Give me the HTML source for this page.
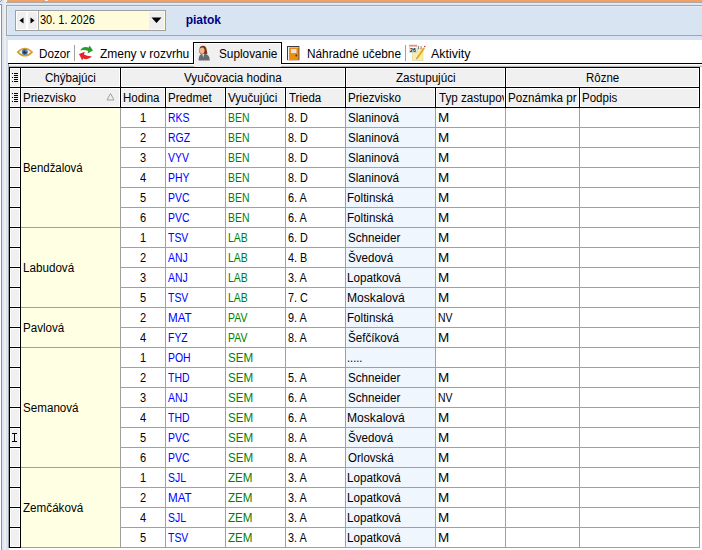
<!DOCTYPE html>
<html><head><meta charset="utf-8"><style>
html,body{margin:0;padding:0;}
body{width:702px;height:550px;overflow:hidden;position:relative;background:#fff;font-family:"Liberation Sans",sans-serif;font-size:12px;}
body>div,body>svg{position:absolute;}
div div{position:absolute;}
.t{position:absolute;white-space:pre;line-height:13px;height:13px;transform-origin:0 0;color:#000;}
</style></head><body>
<div style="left:0px;top:0px;width:702px;height:40px;background:#d9e4f2;"></div>
<div style="left:7px;top:0px;width:695px;height:1px;background:#f2a164;"></div>
<div style="left:7px;top:1px;width:695px;height:1px;background:#00fbfb;"></div>
<div style="left:7px;top:2px;width:695px;height:1px;background:#b4a8a6;"></div>
<div style="left:0px;top:0px;width:7px;height:4px;background:#dfe8f5;"></div>
<div style="left:1px;top:0px;width:1px;height:1px;background:#8c939c;"></div>
<div style="left:0px;top:1px;width:1px;height:1px;background:#8c939c;"></div>
<div style="left:0px;top:4px;width:2px;height:1px;background:#8c939c;"></div>
<div style="left:6px;top:0px;width:1px;height:2px;background:#ffffff;"></div>
<div style="left:6px;top:2px;width:1px;height:1px;background:#a8a8a8;"></div>
<div style="left:45px;top:0px;width:3px;height:1px;background:#f4f6fb;"></div>
<div style="left:6px;top:3px;width:696px;height:1px;background:#dfe9f6;"></div>
<div style="left:6px;top:4px;width:696px;height:1px;background:#dfe9f6;"></div>
<div style="left:0px;top:5px;width:1px;height:545px;background:#ffffff;"></div>
<div style="left:1px;top:4px;width:1px;height:546px;background:#8c939c;"></div>
<div style="left:2px;top:0px;width:2px;height:550px;background:#dae5f3;"></div>
<div style="left:4px;top:0px;width:2px;height:550px;background:#efeeea;"></div>
<div style="left:6px;top:36px;width:2px;height:514px;background:#d9e4f3;"></div>
<div style="left:6px;top:5px;width:696px;height:1px;background:#a2a5aa;"></div>
<div style="left:6px;top:5px;width:1px;height:31px;background:#a2a5aa;"></div>
<div style="left:6px;top:35px;width:696px;height:1px;background:#a2a5aa;"></div>
<div style="left:7px;top:6px;width:695px;height:29px;background:#d8e4f2;"></div>
<div style="left:7px;top:6px;width:695px;height:1px;background:#e3ecf7;"></div>
<div style="left:7px;top:6px;width:1px;height:29px;background:#e3ecf7;"></div>
<div style="left:6px;top:36px;width:696px;height:4px;background:#d9e4f3;"></div>
<div style="left:15px;top:10px;width:151px;height:21px;background:#a0a0a0;"></div>
<div style="left:16px;top:11px;width:149px;height:19px;background:#ffffff;"></div>
<div style="left:39px;top:11px;width:126px;height:19px;background:#fffcdc;"></div>
<div style="left:38px;top:11px;width:1px;height:19px;background:#a8a8a8;"></div>
<div style="left:17px;top:12px;width:9px;height:17px;background:#efefef;"></div>
<div style="left:28px;top:12px;width:9px;height:17px;background:#efefef;"></div>
<div style="left:149px;top:12px;width:15px;height:17px;background:#efefef;"></div>
<svg style="left:0;top:0" width="170" height="32"><path d="M23.5,17.5 L19.5,20.5 L23.5,23.5Z" fill="#000"/><path d="M30.5,17.5 L34.5,20.5 L30.5,23.5Z" fill="#000"/><path d="M151.5,17.5 L161.5,17.5 L156.5,23Z" fill="#000"/></svg>
<div class="t" style="left:39.88px;top:14px;color:#000;transform:scaleX(0.9140);">30. 1. 2026</div>
<div class="t" style="left:185.71px;top:14px;color:#000080;transform:scaleX(1.0000);font-weight:bold;">piatok</div>
<div style="left:8px;top:40px;width:694px;height:23px;background:#ffffff;"></div>
<div style="left:8px;top:63px;width:186px;height:1px;background:#000;"></div>
<div style="left:281px;top:63px;width:421px;height:1px;background:#000;"></div>
<div style="left:194px;top:43px;width:87px;height:24px;background:#f0f0f0;"></div>
<div style="left:193px;top:42px;width:1px;height:22px;background:#000;"></div>
<div style="left:194px;top:43px;width:87px;height:1px;background:#ffffff;"></div>
<div style="left:194px;top:43px;width:1px;height:21px;background:#ffffff;"></div>
<div style="left:280px;top:43px;width:1px;height:21px;background:#ffffff;"></div>
<div style="left:193px;top:42px;width:89px;height:1px;background:#000;"></div>
<div style="left:281px;top:42px;width:1px;height:22px;background:#000;"></div>
<div style="left:8px;top:64px;width:186px;height:1px;background:#ffffff;"></div>
<div style="left:281px;top:64px;width:421px;height:1px;background:#ffffff;"></div>
<div style="left:8px;top:65px;width:186px;height:1px;background:#ececec;"></div>
<div style="left:281px;top:65px;width:421px;height:1px;background:#ececec;"></div>
<div style="left:8px;top:66px;width:186px;height:1px;background:#b8b8b8;"></div>
<div style="left:281px;top:66px;width:421px;height:1px;background:#b8b8b8;"></div>
<div style="left:8px;top:64px;width:1px;height:484px;background:#a0a5ab;"></div>
<div style="left:74px;top:45px;width:1px;height:16px;background:#a0a0a0;"></div>
<div style="left:405px;top:45px;width:1px;height:16px;background:#a0a0a0;"></div>
<div class="t" style="left:38.64px;top:48px;color:#000;transform:scaleX(0.9730);">Dozor</div>
<div class="t" style="left:99.92px;top:48px;color:#000;transform:scaleX(1.0000);">Zmeny v rozvrhu</div>
<div class="t" style="left:218.96px;top:48px;color:#000;transform:scaleX(0.9830);">Suplovanie</div>
<div class="t" style="left:306.83px;top:48px;color:#000;transform:scaleX(0.9850);">Náhradné učebne</div>
<div class="t" style="left:430.98px;top:48px;color:#000;transform:scaleX(1.0400);">Aktivity</div>
<svg style="left:0;top:40px" width="440" height="24">
<g transform="translate(17,7.6)"><path d="M0.7,4.5 Q7.9,-2.6 15.1,4.5 Q7.9,11.8 0.7,4.5Z" fill="#e6f3fb" stroke="#dc9a26" stroke-width="1.5"/><circle cx="7.8" cy="4.5" r="3.0" fill="#3a78b8"/><circle cx="7.8" cy="4.6" r="1.6" fill="#303030"/><circle cx="8.8" cy="3.4" r="0.6" fill="#d0d8e0"/></g>
<g transform="translate(76,4)"><path d="M4.2,6.4 Q7,1.6 12.8,3.6 L13.6,1.6 L17,6.6 L11.6,9.4 L12.2,7 Q8.6,5.6 4.2,6.4Z" fill="#2f9a2f"/><path d="M16,12.2 Q12.5,16.6 7,14.4 L6.2,16.6 L3,10 L8.6,7.8 L8,10.6 Q11.6,12.6 16,12.2Z" fill="#e8232a"/></g>
<g transform="translate(194,3)"><path d="M5.6,5.5 Q6,2.6 9,2.7 Q12.2,2.9 12.6,6.5 L13.4,10.8 Q11,11.4 9.5,10.4 L6,10.6 Q5,9 5.6,5.5Z" fill="#7e3412"/><ellipse cx="8.1" cy="7.6" rx="2.4" ry="3" fill="#f5b890"/><path d="M4.6,17.4 Q4.4,12 8,10.8 L11,10.8 Q15.6,11.6 15.8,17.4Z" fill="#676b6e"/><path d="M8.3,11 L9.2,14.6 L10.3,11Z" fill="#e0e0e0"/></g>
<g transform="translate(287,6)"><rect x="0" y="0" width="12.4" height="14.2" fill="#3c3c3c"/><rect x="1" y="1" width="10.6" height="13.2" fill="#ec8e12"/><rect x="2" y="1" width="9.6" height="1" fill="#f4c050"/><rect x="1" y="1" width="1.1" height="13.2" fill="#f4f4f4"/><rect x="4" y="3" width="5.4" height="4" fill="#e8e2ef"/><circle cx="9.3" cy="9.5" r="0.9" fill="#333"/></g>
<g transform="translate(408,4)"><rect x="4.5" y="4.2" width="10.5" height="12.3" fill="#f7f0a4" stroke="#dcd49c" stroke-width="0.6"/><rect x="10" y="2" width="1" height="3.2" fill="#8a8a8a"/><rect x="12.6" y="2" width="1" height="3.2" fill="#8a8a8a"/><rect x="1.5" y="1" width="7.5" height="7.5" fill="#ffffff" stroke="#c0c0c0" stroke-width="0.6"/><rect x="1.5" y="1" width="7.5" height="1.6" fill="#f28a7a"/><text x="2" y="8" font-family="Liberation Sans" font-size="5.2" font-weight="bold" fill="#000">26</text><path d="M16.2,4 L9.2,14" stroke="#f0a020" stroke-width="1.8"/><path d="M9.2,14 L8.4,15.2" stroke="#909090" stroke-width="1.2"/><circle cx="16.8" cy="2.6" r="0.8" fill="#d03030"/></g>
</svg>
<div style="left:9px;top:67px;width:691px;height:41px;background:#000;"></div>
<div style="left:10px;top:68px;width:10px;height:19px;background:#ffffff;"></div>
<div style="left:11px;top:69px;width:8px;height:17px;background:#f0f0f0;"></div>
<div style="left:21px;top:68px;width:99px;height:19px;background:#ffffff;"></div>
<div style="left:22px;top:69px;width:97px;height:17px;background:#f0f0f0;"></div>
<div style="left:121px;top:68px;width:224px;height:19px;background:#ffffff;"></div>
<div style="left:122px;top:69px;width:222px;height:17px;background:#f0f0f0;"></div>
<div style="left:346px;top:68px;width:159px;height:19px;background:#ffffff;"></div>
<div style="left:347px;top:69px;width:157px;height:17px;background:#f0f0f0;"></div>
<div style="left:506px;top:68px;width:193px;height:19px;background:#ffffff;"></div>
<div style="left:507px;top:69px;width:191px;height:17px;background:#f0f0f0;"></div>
<div style="left:10px;top:88px;width:10px;height:19px;background:#ffffff;"></div>
<div style="left:11px;top:89px;width:8px;height:17px;background:#f0f0f0;"></div>
<div style="left:21px;top:88px;width:99px;height:19px;background:#ffffff;"></div>
<div style="left:22px;top:89px;width:97px;height:17px;background:#f0f0f0;"></div>
<div style="left:121px;top:88px;width:44px;height:19px;background:#ffffff;"></div>
<div style="left:122px;top:89px;width:42px;height:17px;background:#f0f0f0;"></div>
<div style="left:166px;top:88px;width:59px;height:19px;background:#ffffff;"></div>
<div style="left:167px;top:89px;width:57px;height:17px;background:#f0f0f0;"></div>
<div style="left:226px;top:88px;width:59px;height:19px;background:#ffffff;"></div>
<div style="left:227px;top:89px;width:57px;height:17px;background:#f0f0f0;"></div>
<div style="left:286px;top:88px;width:59px;height:19px;background:#ffffff;"></div>
<div style="left:287px;top:89px;width:57px;height:17px;background:#f0f0f0;"></div>
<div style="left:346px;top:88px;width:89px;height:19px;background:#ffffff;"></div>
<div style="left:347px;top:89px;width:87px;height:17px;background:#f0f0f0;"></div>
<div style="left:436px;top:88px;width:69px;height:19px;background:#ffffff;"></div>
<div style="left:437px;top:89px;width:67px;height:17px;background:#f0f0f0;"></div>
<div style="left:506px;top:88px;width:73px;height:19px;background:#ffffff;"></div>
<div style="left:507px;top:89px;width:71px;height:17px;background:#f0f0f0;"></div>
<div style="left:580px;top:88px;width:119px;height:19px;background:#ffffff;"></div>
<div style="left:581px;top:89px;width:117px;height:17px;background:#f0f0f0;"></div>
<svg style="left:0;top:0" width="702" height="108"><rect x="14" y="73" width="4" height="1" fill="#000"/><rect x="14" y="75" width="4" height="1" fill="#000"/><rect x="14" y="77" width="4" height="1" fill="#000"/><rect x="14" y="79" width="4" height="1" fill="#000"/><rect x="14" y="81" width="4" height="1" fill="#000"/><rect x="14" y="93" width="4" height="1" fill="#000"/><rect x="14" y="95" width="4" height="1" fill="#000"/><rect x="14" y="97" width="4" height="1" fill="#000"/><rect x="14" y="99" width="4" height="1" fill="#000"/><rect x="14" y="101" width="4" height="1" fill="#000"/><rect x="12" y="73" width="1" height="1" fill="#000"/><rect x="12" y="77" width="1" height="1" fill="#000"/><rect x="12" y="81" width="1" height="1" fill="#000"/><rect x="12" y="93" width="1" height="1" fill="#000"/><rect x="12" y="97" width="1" height="1" fill="#000"/><rect x="12" y="101" width="1" height="1" fill="#000"/><path d="M110.5,93.5 L114,100 L107,100Z" fill="none" stroke="#a0a0a0" stroke-width="1"/></svg>
<div class="t" style="left:44.64px;top:72px;color:#000;transform:scaleX(0.9661);">Chýbajúci</div>
<div class="t" style="left:183.93px;top:72px;color:#000;transform:scaleX(0.9737);">Vyučovacia hodina</div>
<div class="t" style="left:395.91px;top:72px;color:#000;transform:scaleX(0.9713);">Zastupujúci</div>
<div class="t" style="left:585.70px;top:72px;color:#000;transform:scaleX(0.9563);">Rôzne</div>
<div class="t" style="left:23.05px;top:92px;color:#000;transform:scaleX(0.9682);">Priezvisko</div>
<div class="t" style="left:122.56px;top:92px;color:#000;transform:scaleX(0.9588);">Hodina</div>
<div class="t" style="left:167.55px;top:92px;color:#000;transform:scaleX(0.9647);">Predmet</div>
<div class="t" style="left:228.15px;top:92px;color:#000;transform:scaleX(0.9671);">Vyučujúci</div>
<div class="t" style="left:288.84px;top:92px;color:#000;transform:scaleX(0.9602);">Trieda</div>
<div class="t" style="left:347.55px;top:92px;color:#000;transform:scaleX(0.9682);">Priezvisko</div>
<div style="left:436px;top:88px;width:68px;height:19px;overflow:hidden">
<div class="t" style="left:2.54px;top:4px;transform:scaleX(0.9702)">Typ zastupov</div></div>
<div style="left:506px;top:88px;width:72px;height:19px;overflow:hidden">
<div class="t" style="left:1.55px;top:4px;transform:scaleX(0.9689)">Poznámka pr</div></div>
<div class="t" style="left:581.56px;top:92px;color:#000;transform:scaleX(0.9599);">Podpis</div>
<div style="left:21px;top:108px;width:99px;height:440px;background:#ffffe4;"></div>
<div style="left:346px;top:108px;width:89px;height:440px;background:#f0f6fe;"></div>
<div style="left:9px;top:108px;width:12px;height:440px;background:#000;"></div>
<div style="left:10px;top:108px;width:10px;height:19px;background:#ffffff;"></div>
<div style="left:11px;top:109px;width:8px;height:17px;background:#f0f0f0;"></div>
<div style="left:10px;top:128px;width:10px;height:19px;background:#ffffff;"></div>
<div style="left:11px;top:129px;width:8px;height:17px;background:#f0f0f0;"></div>
<div style="left:10px;top:148px;width:10px;height:19px;background:#ffffff;"></div>
<div style="left:11px;top:149px;width:8px;height:17px;background:#f0f0f0;"></div>
<div style="left:10px;top:168px;width:10px;height:19px;background:#ffffff;"></div>
<div style="left:11px;top:169px;width:8px;height:17px;background:#f0f0f0;"></div>
<div style="left:10px;top:188px;width:10px;height:19px;background:#ffffff;"></div>
<div style="left:11px;top:189px;width:8px;height:17px;background:#f0f0f0;"></div>
<div style="left:10px;top:208px;width:10px;height:19px;background:#ffffff;"></div>
<div style="left:11px;top:209px;width:8px;height:17px;background:#f0f0f0;"></div>
<div style="left:10px;top:228px;width:10px;height:19px;background:#ffffff;"></div>
<div style="left:11px;top:229px;width:8px;height:17px;background:#f0f0f0;"></div>
<div style="left:10px;top:248px;width:10px;height:19px;background:#ffffff;"></div>
<div style="left:11px;top:249px;width:8px;height:17px;background:#f0f0f0;"></div>
<div style="left:10px;top:268px;width:10px;height:19px;background:#ffffff;"></div>
<div style="left:11px;top:269px;width:8px;height:17px;background:#f0f0f0;"></div>
<div style="left:10px;top:288px;width:10px;height:19px;background:#ffffff;"></div>
<div style="left:11px;top:289px;width:8px;height:17px;background:#f0f0f0;"></div>
<div style="left:10px;top:308px;width:10px;height:19px;background:#ffffff;"></div>
<div style="left:11px;top:309px;width:8px;height:17px;background:#f0f0f0;"></div>
<div style="left:10px;top:328px;width:10px;height:19px;background:#ffffff;"></div>
<div style="left:11px;top:329px;width:8px;height:17px;background:#f0f0f0;"></div>
<div style="left:10px;top:348px;width:10px;height:19px;background:#ffffff;"></div>
<div style="left:11px;top:349px;width:8px;height:17px;background:#f0f0f0;"></div>
<div style="left:10px;top:368px;width:10px;height:19px;background:#ffffff;"></div>
<div style="left:11px;top:369px;width:8px;height:17px;background:#f0f0f0;"></div>
<div style="left:10px;top:388px;width:10px;height:19px;background:#ffffff;"></div>
<div style="left:11px;top:389px;width:8px;height:17px;background:#f0f0f0;"></div>
<div style="left:10px;top:408px;width:10px;height:19px;background:#ffffff;"></div>
<div style="left:11px;top:409px;width:8px;height:17px;background:#f0f0f0;"></div>
<div style="left:10px;top:428px;width:10px;height:19px;background:#ffffff;"></div>
<div style="left:11px;top:429px;width:8px;height:17px;background:#f0f0f0;"></div>
<div style="left:10px;top:448px;width:10px;height:19px;background:#ffffff;"></div>
<div style="left:11px;top:449px;width:8px;height:17px;background:#f0f0f0;"></div>
<div style="left:10px;top:468px;width:10px;height:19px;background:#ffffff;"></div>
<div style="left:11px;top:469px;width:8px;height:17px;background:#f0f0f0;"></div>
<div style="left:10px;top:488px;width:10px;height:19px;background:#ffffff;"></div>
<div style="left:11px;top:489px;width:8px;height:17px;background:#f0f0f0;"></div>
<div style="left:10px;top:508px;width:10px;height:19px;background:#ffffff;"></div>
<div style="left:11px;top:509px;width:8px;height:17px;background:#f0f0f0;"></div>
<div style="left:10px;top:528px;width:10px;height:19px;background:#ffffff;"></div>
<div style="left:11px;top:529px;width:8px;height:17px;background:#f0f0f0;"></div>
<div style="left:8px;top:548px;width:1px;height:2px;background:#d9e4f3;"></div>
<div style="left:120px;top:108px;width:1px;height:440px;background:#a0a0a0;"></div>
<div style="left:165px;top:108px;width:1px;height:440px;background:#a0a0a0;"></div>
<div style="left:225px;top:108px;width:1px;height:440px;background:#a0a0a0;"></div>
<div style="left:285px;top:108px;width:1px;height:440px;background:#a0a0a0;"></div>
<div style="left:345px;top:108px;width:1px;height:440px;background:#a0a0a0;"></div>
<div style="left:435px;top:108px;width:1px;height:440px;background:#a0a0a0;"></div>
<div style="left:505px;top:108px;width:1px;height:440px;background:#a0a0a0;"></div>
<div style="left:579px;top:108px;width:1px;height:440px;background:#a0a0a0;"></div>
<div style="left:699px;top:108px;width:1px;height:440px;background:#a0a0a0;"></div>
<div style="left:121px;top:127px;width:579px;height:1px;background:#a0a0a0;"></div>
<div style="left:121px;top:147px;width:579px;height:1px;background:#a0a0a0;"></div>
<div style="left:121px;top:167px;width:579px;height:1px;background:#a0a0a0;"></div>
<div style="left:121px;top:187px;width:579px;height:1px;background:#a0a0a0;"></div>
<div style="left:121px;top:207px;width:579px;height:1px;background:#a0a0a0;"></div>
<div style="left:121px;top:227px;width:579px;height:1px;background:#a0a0a0;"></div>
<div style="left:21px;top:227px;width:99px;height:1px;background:#a0a0a0;"></div>
<div class="t" style="left:22.76px;top:162px;color:#000;transform:scaleX(0.9510);">Bendžalová</div>
<div class="t" style="left:139.78px;top:112px;color:#000;transform:scaleX(0.9200);">1</div>
<div class="t" style="left:167.64px;top:112px;color:#0000ff;transform:scaleX(0.8700);">RKS</div>
<div class="t" style="left:227.74px;top:112px;color:#008000;transform:scaleX(0.8700);">BEN</div>
<div class="t" style="left:287.73px;top:112px;color:#000;transform:scaleX(0.9003);">8. D</div>
<div class="t" style="left:347.87px;top:112px;color:#000;transform:scaleX(0.9675);">Slaninová</div>
<div class="t" style="left:437.50px;top:112px;color:#000;transform:scaleX(1.1200);">M</div>
<div class="t" style="left:139.93px;top:132px;color:#000;transform:scaleX(0.9200);">2</div>
<div class="t" style="left:167.64px;top:132px;color:#0000ff;transform:scaleX(0.8700);">RGZ</div>
<div class="t" style="left:227.74px;top:132px;color:#008000;transform:scaleX(0.8700);">BEN</div>
<div class="t" style="left:287.73px;top:132px;color:#000;transform:scaleX(0.9003);">8. D</div>
<div class="t" style="left:347.87px;top:132px;color:#000;transform:scaleX(0.9675);">Slaninová</div>
<div class="t" style="left:437.50px;top:132px;color:#000;transform:scaleX(1.1200);">M</div>
<div class="t" style="left:139.96px;top:152px;color:#000;transform:scaleX(0.9200);">3</div>
<div class="t" style="left:168.45px;top:152px;color:#0000ff;transform:scaleX(0.8700);">VYV</div>
<div class="t" style="left:227.74px;top:152px;color:#008000;transform:scaleX(0.8700);">BEN</div>
<div class="t" style="left:287.73px;top:152px;color:#000;transform:scaleX(0.9003);">8. D</div>
<div class="t" style="left:347.87px;top:152px;color:#000;transform:scaleX(0.9675);">Slaninová</div>
<div class="t" style="left:437.50px;top:152px;color:#000;transform:scaleX(1.1200);">M</div>
<div class="t" style="left:139.97px;top:172px;color:#000;transform:scaleX(0.9200);">4</div>
<div class="t" style="left:167.64px;top:172px;color:#0000ff;transform:scaleX(0.8700);">PHY</div>
<div class="t" style="left:227.74px;top:172px;color:#008000;transform:scaleX(0.8700);">BEN</div>
<div class="t" style="left:287.73px;top:172px;color:#000;transform:scaleX(0.9003);">8. D</div>
<div class="t" style="left:347.87px;top:172px;color:#000;transform:scaleX(0.9675);">Slaninová</div>
<div class="t" style="left:437.50px;top:172px;color:#000;transform:scaleX(1.1200);">M</div>
<div class="t" style="left:139.94px;top:192px;color:#000;transform:scaleX(0.9200);">5</div>
<div class="t" style="left:167.64px;top:192px;color:#0000ff;transform:scaleX(0.8700);">PVC</div>
<div class="t" style="left:227.74px;top:192px;color:#008000;transform:scaleX(0.8700);">BEN</div>
<div class="t" style="left:287.65px;top:192px;color:#000;transform:scaleX(0.9013);">6. A</div>
<div class="t" style="left:347.45px;top:192px;color:#000;transform:scaleX(0.9674);">Foltinská</div>
<div class="t" style="left:437.50px;top:192px;color:#000;transform:scaleX(1.1200);">M</div>
<div class="t" style="left:139.89px;top:212px;color:#000;transform:scaleX(0.9200);">6</div>
<div class="t" style="left:167.64px;top:212px;color:#0000ff;transform:scaleX(0.8700);">PVC</div>
<div class="t" style="left:227.74px;top:212px;color:#008000;transform:scaleX(0.8700);">BEN</div>
<div class="t" style="left:287.65px;top:212px;color:#000;transform:scaleX(0.9013);">6. A</div>
<div class="t" style="left:347.45px;top:212px;color:#000;transform:scaleX(0.9674);">Foltinská</div>
<div class="t" style="left:437.50px;top:212px;color:#000;transform:scaleX(1.1200);">M</div>
<div style="left:121px;top:247px;width:579px;height:1px;background:#a0a0a0;"></div>
<div style="left:121px;top:267px;width:579px;height:1px;background:#a0a0a0;"></div>
<div style="left:121px;top:287px;width:579px;height:1px;background:#a0a0a0;"></div>
<div style="left:121px;top:307px;width:579px;height:1px;background:#a0a0a0;"></div>
<div style="left:21px;top:307px;width:99px;height:1px;background:#a0a0a0;"></div>
<div class="t" style="left:22.74px;top:262px;color:#000;transform:scaleX(0.9704);">Labudová</div>
<div class="t" style="left:139.78px;top:232px;color:#000;transform:scaleX(0.9200);">1</div>
<div class="t" style="left:168.27px;top:232px;color:#0000ff;transform:scaleX(0.8700);">TSV</div>
<div class="t" style="left:227.74px;top:232px;color:#008000;transform:scaleX(0.8700);">LAB</div>
<div class="t" style="left:287.65px;top:232px;color:#000;transform:scaleX(0.9003);">6. D</div>
<div class="t" style="left:347.87px;top:232px;color:#000;transform:scaleX(0.9680);">Schneider</div>
<div class="t" style="left:437.50px;top:232px;color:#000;transform:scaleX(1.1200);">M</div>
<div class="t" style="left:139.93px;top:252px;color:#000;transform:scaleX(0.9200);">2</div>
<div class="t" style="left:168.48px;top:252px;color:#0000ff;transform:scaleX(0.8700);">ANJ</div>
<div class="t" style="left:227.74px;top:252px;color:#008000;transform:scaleX(0.8700);">LAB</div>
<div class="t" style="left:287.95px;top:252px;color:#000;transform:scaleX(0.9013);">4. B</div>
<div class="t" style="left:347.87px;top:252px;color:#000;transform:scaleX(0.9653);">Švedová</div>
<div class="t" style="left:437.50px;top:252px;color:#000;transform:scaleX(1.1200);">M</div>
<div class="t" style="left:139.96px;top:272px;color:#000;transform:scaleX(0.9200);">3</div>
<div class="t" style="left:168.48px;top:272px;color:#0000ff;transform:scaleX(0.8700);">ANJ</div>
<div class="t" style="left:227.74px;top:272px;color:#008000;transform:scaleX(0.8700);">LAB</div>
<div class="t" style="left:287.79px;top:272px;color:#000;transform:scaleX(0.9013);">3. A</div>
<div class="t" style="left:347.44px;top:272px;color:#000;transform:scaleX(0.9711);">Lopatková</div>
<div class="t" style="left:437.50px;top:272px;color:#000;transform:scaleX(1.1200);">M</div>
<div class="t" style="left:139.94px;top:292px;color:#000;transform:scaleX(0.9200);">5</div>
<div class="t" style="left:168.27px;top:292px;color:#0000ff;transform:scaleX(0.8700);">TSV</div>
<div class="t" style="left:227.74px;top:292px;color:#008000;transform:scaleX(0.8700);">LAB</div>
<div class="t" style="left:287.65px;top:292px;color:#000;transform:scaleX(0.9003);">7. C</div>
<div class="t" style="left:347.41px;top:292px;color:#000;transform:scaleX(1.0085);">Moskalová</div>
<div class="t" style="left:437.50px;top:292px;color:#000;transform:scaleX(1.1200);">M</div>
<div style="left:121px;top:327px;width:579px;height:1px;background:#a0a0a0;"></div>
<div style="left:121px;top:347px;width:579px;height:1px;background:#a0a0a0;"></div>
<div style="left:21px;top:347px;width:99px;height:1px;background:#a0a0a0;"></div>
<div class="t" style="left:22.75px;top:322px;color:#000;transform:scaleX(0.9634);">Pavlová</div>
<div class="t" style="left:139.93px;top:312px;color:#000;transform:scaleX(0.9200);">2</div>
<div class="t" style="left:167.55px;top:312px;color:#0000ff;transform:scaleX(0.9687);">MAT</div>
<div class="t" style="left:227.74px;top:312px;color:#008000;transform:scaleX(0.8700);">PAV</div>
<div class="t" style="left:287.69px;top:312px;color:#000;transform:scaleX(0.9013);">9. A</div>
<div class="t" style="left:347.45px;top:312px;color:#000;transform:scaleX(0.9674);">Foltinská</div>
<div class="t" style="left:437.74px;top:312px;color:#000;transform:scaleX(0.8700);">NV</div>
<div class="t" style="left:139.97px;top:332px;color:#000;transform:scaleX(0.9200);">4</div>
<div class="t" style="left:167.64px;top:332px;color:#0000ff;transform:scaleX(0.8700);">FYZ</div>
<div class="t" style="left:227.74px;top:332px;color:#008000;transform:scaleX(0.8700);">PAV</div>
<div class="t" style="left:287.73px;top:332px;color:#000;transform:scaleX(0.9013);">8. A</div>
<div class="t" style="left:347.87px;top:332px;color:#000;transform:scaleX(0.9675);">Šefčíková</div>
<div class="t" style="left:437.50px;top:332px;color:#000;transform:scaleX(1.1200);">M</div>
<div style="left:121px;top:367px;width:579px;height:1px;background:#a0a0a0;"></div>
<div style="left:121px;top:387px;width:579px;height:1px;background:#a0a0a0;"></div>
<div style="left:121px;top:407px;width:579px;height:1px;background:#a0a0a0;"></div>
<div style="left:121px;top:427px;width:579px;height:1px;background:#a0a0a0;"></div>
<div style="left:121px;top:447px;width:579px;height:1px;background:#a0a0a0;"></div>
<div style="left:121px;top:467px;width:579px;height:1px;background:#a0a0a0;"></div>
<div style="left:21px;top:467px;width:99px;height:1px;background:#a0a0a0;"></div>
<div class="t" style="left:23.17px;top:402px;color:#000;transform:scaleX(0.9690);">Semanová</div>
<div class="t" style="left:139.78px;top:352px;color:#000;transform:scaleX(0.9200);">1</div>
<div class="t" style="left:167.64px;top:352px;color:#0000ff;transform:scaleX(0.8700);">POH</div>
<div class="t" style="left:228.07px;top:352px;color:#008000;transform:scaleX(0.9661);">SEM</div>
<div class="t" style="left:347.39px;top:352px;color:#000;transform:scaleX(0.9200);">.....</div>
<div class="t" style="left:139.93px;top:372px;color:#000;transform:scaleX(0.9200);">2</div>
<div class="t" style="left:168.27px;top:372px;color:#0000ff;transform:scaleX(0.8700);">THD</div>
<div class="t" style="left:228.07px;top:372px;color:#008000;transform:scaleX(0.9661);">SEM</div>
<div class="t" style="left:287.77px;top:372px;color:#000;transform:scaleX(0.9013);">5. A</div>
<div class="t" style="left:347.87px;top:372px;color:#000;transform:scaleX(0.9680);">Schneider</div>
<div class="t" style="left:437.50px;top:372px;color:#000;transform:scaleX(1.1200);">M</div>
<div class="t" style="left:139.96px;top:392px;color:#000;transform:scaleX(0.9200);">3</div>
<div class="t" style="left:168.48px;top:392px;color:#0000ff;transform:scaleX(0.8700);">ANJ</div>
<div class="t" style="left:228.07px;top:392px;color:#008000;transform:scaleX(0.9661);">SEM</div>
<div class="t" style="left:287.65px;top:392px;color:#000;transform:scaleX(0.9013);">6. A</div>
<div class="t" style="left:347.87px;top:392px;color:#000;transform:scaleX(0.9680);">Schneider</div>
<div class="t" style="left:437.74px;top:392px;color:#000;transform:scaleX(0.8700);">NV</div>
<div class="t" style="left:139.97px;top:412px;color:#000;transform:scaleX(0.9200);">4</div>
<div class="t" style="left:168.27px;top:412px;color:#0000ff;transform:scaleX(0.8700);">THD</div>
<div class="t" style="left:228.07px;top:412px;color:#008000;transform:scaleX(0.9661);">SEM</div>
<div class="t" style="left:287.65px;top:412px;color:#000;transform:scaleX(0.9013);">6. A</div>
<div class="t" style="left:347.41px;top:412px;color:#000;transform:scaleX(1.0085);">Moskalová</div>
<div class="t" style="left:437.50px;top:412px;color:#000;transform:scaleX(1.1200);">M</div>
<div class="t" style="left:139.94px;top:432px;color:#000;transform:scaleX(0.9200);">5</div>
<div class="t" style="left:167.64px;top:432px;color:#0000ff;transform:scaleX(0.8700);">PVC</div>
<div class="t" style="left:228.07px;top:432px;color:#008000;transform:scaleX(0.9661);">SEM</div>
<div class="t" style="left:287.73px;top:432px;color:#000;transform:scaleX(0.9013);">8. A</div>
<div class="t" style="left:347.87px;top:432px;color:#000;transform:scaleX(0.9653);">Švedová</div>
<div class="t" style="left:437.50px;top:432px;color:#000;transform:scaleX(1.1200);">M</div>
<div class="t" style="left:139.89px;top:452px;color:#000;transform:scaleX(0.9200);">6</div>
<div class="t" style="left:167.64px;top:452px;color:#0000ff;transform:scaleX(0.8700);">PVC</div>
<div class="t" style="left:228.07px;top:452px;color:#008000;transform:scaleX(0.9661);">SEM</div>
<div class="t" style="left:287.73px;top:452px;color:#000;transform:scaleX(0.9013);">8. A</div>
<div class="t" style="left:347.85px;top:452px;color:#000;transform:scaleX(0.9623);">Orlovská</div>
<div class="t" style="left:437.50px;top:452px;color:#000;transform:scaleX(1.1200);">M</div>
<div style="left:121px;top:487px;width:579px;height:1px;background:#a0a0a0;"></div>
<div style="left:121px;top:507px;width:579px;height:1px;background:#a0a0a0;"></div>
<div style="left:121px;top:527px;width:579px;height:1px;background:#a0a0a0;"></div>
<div style="left:121px;top:547px;width:579px;height:1px;background:#a0a0a0;"></div>
<div style="left:21px;top:547px;width:99px;height:1px;background:#a0a0a0;"></div>
<div class="t" style="left:23.33px;top:502px;color:#000;transform:scaleX(0.9714);">Zemčáková</div>
<div class="t" style="left:139.78px;top:472px;color:#000;transform:scaleX(0.9200);">1</div>
<div class="t" style="left:168.03px;top:472px;color:#0000ff;transform:scaleX(0.8700);">SJL</div>
<div class="t" style="left:228.23px;top:472px;color:#008000;transform:scaleX(0.9687);">ZEM</div>
<div class="t" style="left:287.79px;top:472px;color:#000;transform:scaleX(0.9013);">3. A</div>
<div class="t" style="left:347.44px;top:472px;color:#000;transform:scaleX(0.9711);">Lopatková</div>
<div class="t" style="left:437.50px;top:472px;color:#000;transform:scaleX(1.1200);">M</div>
<div class="t" style="left:139.93px;top:492px;color:#000;transform:scaleX(0.9200);">2</div>
<div class="t" style="left:167.55px;top:492px;color:#0000ff;transform:scaleX(0.9687);">MAT</div>
<div class="t" style="left:228.23px;top:492px;color:#008000;transform:scaleX(0.9687);">ZEM</div>
<div class="t" style="left:287.79px;top:492px;color:#000;transform:scaleX(0.9013);">3. A</div>
<div class="t" style="left:347.44px;top:492px;color:#000;transform:scaleX(0.9711);">Lopatková</div>
<div class="t" style="left:437.50px;top:492px;color:#000;transform:scaleX(1.1200);">M</div>
<div class="t" style="left:139.97px;top:512px;color:#000;transform:scaleX(0.9200);">4</div>
<div class="t" style="left:168.03px;top:512px;color:#0000ff;transform:scaleX(0.8700);">SJL</div>
<div class="t" style="left:228.23px;top:512px;color:#008000;transform:scaleX(0.9687);">ZEM</div>
<div class="t" style="left:287.79px;top:512px;color:#000;transform:scaleX(0.9013);">3. A</div>
<div class="t" style="left:347.44px;top:512px;color:#000;transform:scaleX(0.9711);">Lopatková</div>
<div class="t" style="left:437.50px;top:512px;color:#000;transform:scaleX(1.1200);">M</div>
<div class="t" style="left:139.94px;top:532px;color:#000;transform:scaleX(0.9200);">5</div>
<div class="t" style="left:168.27px;top:532px;color:#0000ff;transform:scaleX(0.8700);">TSV</div>
<div class="t" style="left:228.23px;top:532px;color:#008000;transform:scaleX(0.9687);">ZEM</div>
<div class="t" style="left:287.79px;top:532px;color:#000;transform:scaleX(0.9013);">3. A</div>
<div class="t" style="left:347.44px;top:532px;color:#000;transform:scaleX(0.9711);">Lopatková</div>
<div class="t" style="left:437.50px;top:532px;color:#000;transform:scaleX(1.1200);">M</div>
<svg style="left:0;top:0" width="30" height="550"><path d="M12,433.5 H13.5 M15.5,433.5 H17 M14.5,434 V441 M12,441.5 H13.5 M15.5,441.5 H17" stroke="#000" stroke-width="1" fill="none"/><rect x="13" y="433" width="3" height="1" fill="#000"/><rect x="13" y="441" width="3" height="1" fill="#000"/></svg>
</body></html>
